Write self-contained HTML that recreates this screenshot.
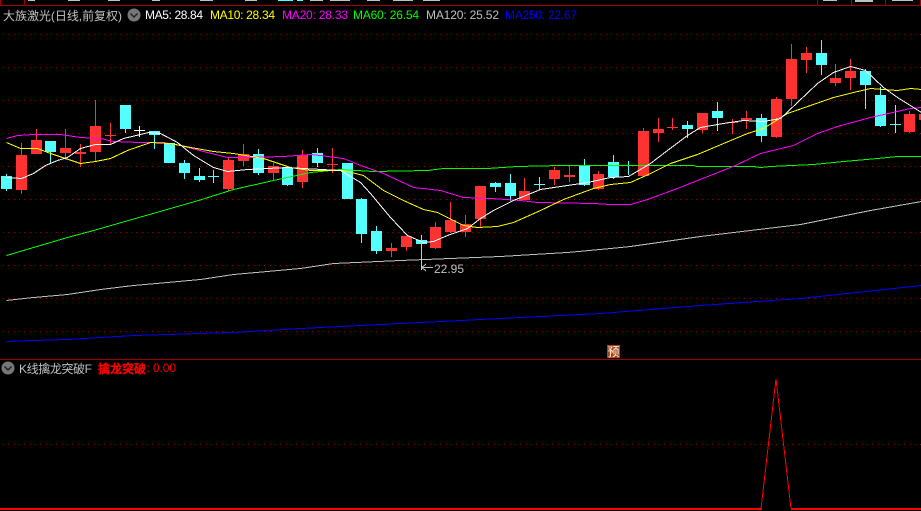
<!DOCTYPE html>
<html><head><meta charset="utf-8"><style>
html,body{margin:0;padding:0;background:#000;width:921px;height:511px;overflow:hidden}
svg{display:block}
text{font-family:"Liberation Sans","WenQuanYi Zen Hei","Noto Sans CJK SC",sans-serif;font-size:12px}
</style></head><body>
<svg width="921" height="511" viewBox="0 0 921 511" xmlns="http://www.w3.org/2000/svg">
<defs><pattern id="dots" x="3" y="0" width="16" height="1" patternUnits="userSpaceOnUse"><rect x="0" y="0" width="1" height="1" fill="#990000"/><rect x="5" y="0" width="1" height="1" fill="#990000"/><rect x="11" y="0" width="1" height="1" fill="#990000"/></pattern></defs>
<rect width="921" height="511" fill="#000"/>
<g shape-rendering="crispEdges">
<!-- top strip -->
<g fill="#c0c0c0"><path d="M28 0h7v1h-7zM68 0h12v1h-12zM108 0h12v1h-12zM152 0h8v1h-8zM200 0h13v1h-13zM245 0h12v1h-12zM310 0h13v1h-13zM330 0h20v1h-20zM367 0h13v1h-13zM393 0h20v1h-20zM423 0h17v1h-17zM823 0h14v1h-14zM855 0h18v2h-18zM892 0h21v1h-21z"/></g>
<path fill="#54ffff" d="M278 0h15v1h-15zM297 0h6v1h-6z"/>
<g fill="#a00000"><rect x="0" y="5" width="921" height="1"/><rect x="0" y="0" width="1" height="5"/><rect x="24" y="0" width="1" height="5"/><rect x="817" y="0" width="1" height="5"/><rect x="851" y="0" width="1" height="5"/><rect x="885" y="0" width="1" height="5"/><rect x="920" y="0" width="1" height="5"/><rect x="0" y="359" width="921" height="1"/></g>
<!-- grid -->
<g fill="url(#dots)">
<rect x="3" y="34" width="918" height="1"/><rect x="3" y="67" width="918" height="1"/><rect x="3" y="100" width="918" height="1"/><rect x="3" y="133" width="918" height="1"/><rect x="3" y="166" width="918" height="1"/><rect x="3" y="199" width="918" height="1"/><rect x="3" y="232" width="918" height="1"/><rect x="3" y="265" width="918" height="1"/><rect x="3" y="298" width="918" height="1"/><rect x="3" y="331" width="918" height="1"/><rect x="3" y="444" width="918" height="1"/>
</g>
<!-- red candles -->
<path fill="#ff3232" d="M16 155h11v35h-11zM21 143h1v51h-1zM31 140h11v14h-11zM36 129h1v25h-1zM60 148h11v5h-11zM65 129h1v31h-1zM75 152h11v2h-11zM80 144h1v23h-1zM90 126h11v26h-11zM95 100h1v61h-1zM105 135h11v1h-11zM110 123h1v22h-1zM223 160h11v29h-11zM228 158h1v33h-1zM238 154h11v7h-11zM243 144h1v22h-1zM268 166h11v7h-11zM273 163h1v18h-1zM297 155h11v27h-11zM302 150h1v38h-1zM327 164h11v1h-11zM332 148h1v25h-1zM386 248h11v3h-11zM391 243h1v14h-1zM401 236h11v11h-11zM406 236h1v15h-1zM430 227h11v21h-11zM435 222h1v27h-1zM445 220h11v12h-11zM450 202h1v31h-1zM460 224h11v8h-11zM465 215h1v22h-1zM475 186h11v33h-11zM480 186h1v41h-1zM519 191h11v9h-11zM524 178h1v22h-1zM549 170h11v9h-11zM554 167h1v18h-1zM564 175h11v2h-11zM569 166h1v16h-1zM593 174h11v15h-11zM598 171h1v19h-1zM638 131h11v45h-11zM643 128h1v48h-1zM653 129h11v4h-11zM658 118h1v24h-1zM667 127h11v1h-11zM672 118h1v12h-1zM697 113h11v17h-11zM702 113h1v20h-1zM727 122h11v1h-11zM732 119h1v15h-1zM741 118h11v2h-11zM746 111h1v18h-1zM771 99h11v38h-11zM776 97h1v41h-1zM786 59h11v40h-11zM791 44h1v62h-1zM801 53h11v7h-11zM806 47h1v26h-1zM830 78h11v5h-11zM835 64h1v22h-1zM845 71h11v7h-11zM850 59h1v31h-1zM904 114h11v18h-11zM909 111h1v22h-1zM919 114h2v6h-2z"/>
<!-- cyan candles -->
<path fill="#54ffff" d="M1 176h11v13h-11zM6 174h1v17h-1zM45 141h11v11h-11zM50 141h1v22h-1zM120 105h11v24h-11zM125 105h1v28h-1zM149 131h11v4h-11zM154 131h1v18h-1zM164 143h11v20h-11zM179 163h11v10h-11zM184 160h1v19h-1zM194 176h11v4h-11zM199 168h1v14h-1zM208 176h11v1h-11zM213 170h1v13h-1zM253 154h11v19h-11zM258 149h1v26h-1zM282 168h11v17h-11zM287 166h1v20h-1zM312 153h11v10h-11zM317 148h1v19h-1zM342 163h11v36h-11zM356 199h11v35h-11zM361 198h1v45h-1zM371 231h11v20h-11zM376 226h1v28h-1zM416 240h11v4h-11zM421 235h1v35h-1zM490 183h11v4h-11zM495 182h1v10h-1zM505 183h11v13h-11zM510 174h1v27h-1zM534 184h11v1h-11zM539 177h1v13h-1zM579 166h11v19h-11zM584 159h1v27h-1zM608 162h11v15h-11zM613 155h1v24h-1zM623 165h11v1h-11zM628 161h1v14h-1zM682 125h11v4h-11zM687 121h1v17h-1zM712 111h11v7h-11zM717 102h1v29h-1zM756 118h11v18h-11zM761 114h1v28h-1zM816 53h11v12h-11zM821 40h1v35h-1zM860 71h11v14h-11zM865 69h1v40h-1zM875 95h11v31h-11zM880 87h1v40h-1zM890 124h11v1h-11zM895 105h1v28h-1z"/>
<path fill="#fff" d="M134 130h11v1h-11zM139 126h1v11h-1z"/>
<!-- MA lines -->
<g fill="none" stroke-width="1" transform="translate(0.5,0.5)">
<polyline stroke="#0000ff" points="6,341 33,340 67,339 100,337 133,335 167,334 200,333 233,332 267,330 300,328 400,323 500,318 600,313 700,305 800,298 921,285"/>
<polyline stroke="#c0c0c0" points="6,300 33,297 67,294 100,289 133,285 167,282 200,279 233,274 267,271 300,268 333,263 400,260 450,258 500,256 533,254 567,252 610,248 630,246 700,236 800,224 870,210 921,201"/>
<polyline stroke="#00ff00" points="6,255 33,247 67,237 93,230 198,200 233,189 273,180 310,172 340,169 373,171 427,170 443,168 487,168 517,166 560,165 610,165 693,165 697,166 753,166 760,167 770,166 813,164 843,161 877,158 897,156 921,156"/>
<polyline stroke="#ff00ff" points="6,138 17,135 33,134 60,134 80,137 100,138 113,141 140,142 163,142 180,145 207,152 227,157 247,157 283,156 310,154 320,155 343,158 363,166 383,173 413,187 440,190 463,197 490,198 520,200 537,202 593,203 610,204 630,204 647,199 677,188 735,165 760,153 793,145 817,133 837,126 870,117 910,108 921,107"/>
<polyline stroke="#ffff00" points="6,142 20,148 37,148 50,153 65,158 80,163 95,161 110,158 127,150 150,142 170,143 190,147 213,151 233,153 263,158 290,167 310,170 343,170 363,175 383,190 403,200 423,209 437,212 463,225 477,227 497,226 513,222 540,210 563,199 593,188 610,184 630,182 650,173 670,163 697,154 723,143 747,133 763,128 787,113 810,105 833,97 853,92 870,88 897,90 910,88 921,89"/>
<polyline stroke="#ffffff" points="6,177 21,178 33,173 45,165 57,160 67,157 80,148 95,144 110,144 123,138 140,134 148,132 160,133 177,142 193,155 213,167 227,171 247,169 267,168 287,167 303,168 340,170 360,182 370,193 390,217 407,235 423,242 433,241 447,235 467,228 480,218 493,210 513,200 540,189 567,185 587,182 610,177 628,176 650,163 667,150 687,135 700,127 723,123 743,120 763,121 780,118 797,102 817,83 833,72 850,66 865,70 883,87 897,97 921,112"/>
</g>
<!-- low marker -->
<g stroke="#c0c0c0" fill="none"><path d="M422 267.5H433M422 267.5L426 264M422 267.5L426 271"/></g>
<!-- lower line -->
<path fill="none" stroke="#ff0000" stroke-width="1" d="M761 508.5L776 379L791 508.5"/>
<rect x="0" y="508" width="762" height="2" fill="#ff0000"/><rect x="791" y="508" width="130" height="2" fill="#ff0000"/>
<!-- badge -->
<rect x="607" y="345" width="13" height="13" fill="#a84010"/>
</g>
<!-- icons -->
<circle cx="134" cy="15" r="6.5" fill="#777"/>
<path d="M130.5 13.5L134 17L137.5 13.5" fill="none" stroke="#222" stroke-width="1.5"/>
<circle cx="8" cy="368" r="6.5" fill="#777"/>
<path d="M4.5 366.5L8 370L11.5 366.5" fill="none" stroke="#222" stroke-width="1.5"/>
<!-- text -->
<text x="3" y="20" fill="#c0c0c0" textLength="119" lengthAdjust="spacing">大族激光(日线,前复权)</text>
<text x="145" y="19" fill="#ffffff" textLength="58" lengthAdjust="spacing">MA5: 28.84</text>
<text x="210" y="19" fill="#ffff00" textLength="65" lengthAdjust="spacing">MA10: 28.34</text>
<text x="282" y="19" fill="#ff00ff" textLength="66" lengthAdjust="spacing">MA20: 28.33</text>
<text x="353" y="19" fill="#00ff00" textLength="66" lengthAdjust="spacing">MA60: 26.54</text>
<text x="426" y="19" fill="#c0c0c0" textLength="73" lengthAdjust="spacing">MA120: 25.52</text>
<text x="505" y="19" fill="#0000ff" textLength="72" lengthAdjust="spacing">MA250: 22.67</text>
<text x="434" y="273" fill="#c0c0c0" textLength="30" lengthAdjust="spacing">22.95</text>
<text x="19" y="373" fill="#c0c0c0" textLength="73" lengthAdjust="spacing">K线擒龙突破F</text>
<text x="98" y="373" fill="#ff0000" font-weight="bold" stroke="#ff0000" stroke-width="0.3" textLength="48" lengthAdjust="spacing">擒龙突破</text>
<text x="146.5" y="372" fill="#ff0000">:</text>
<text x="153" y="372" fill="#ff0000" textLength="23" lengthAdjust="spacing">0.00</text>
<text x="607.5" y="356" fill="#ffffff" style="font-size:12px">预</text>
</svg>
</body></html>
